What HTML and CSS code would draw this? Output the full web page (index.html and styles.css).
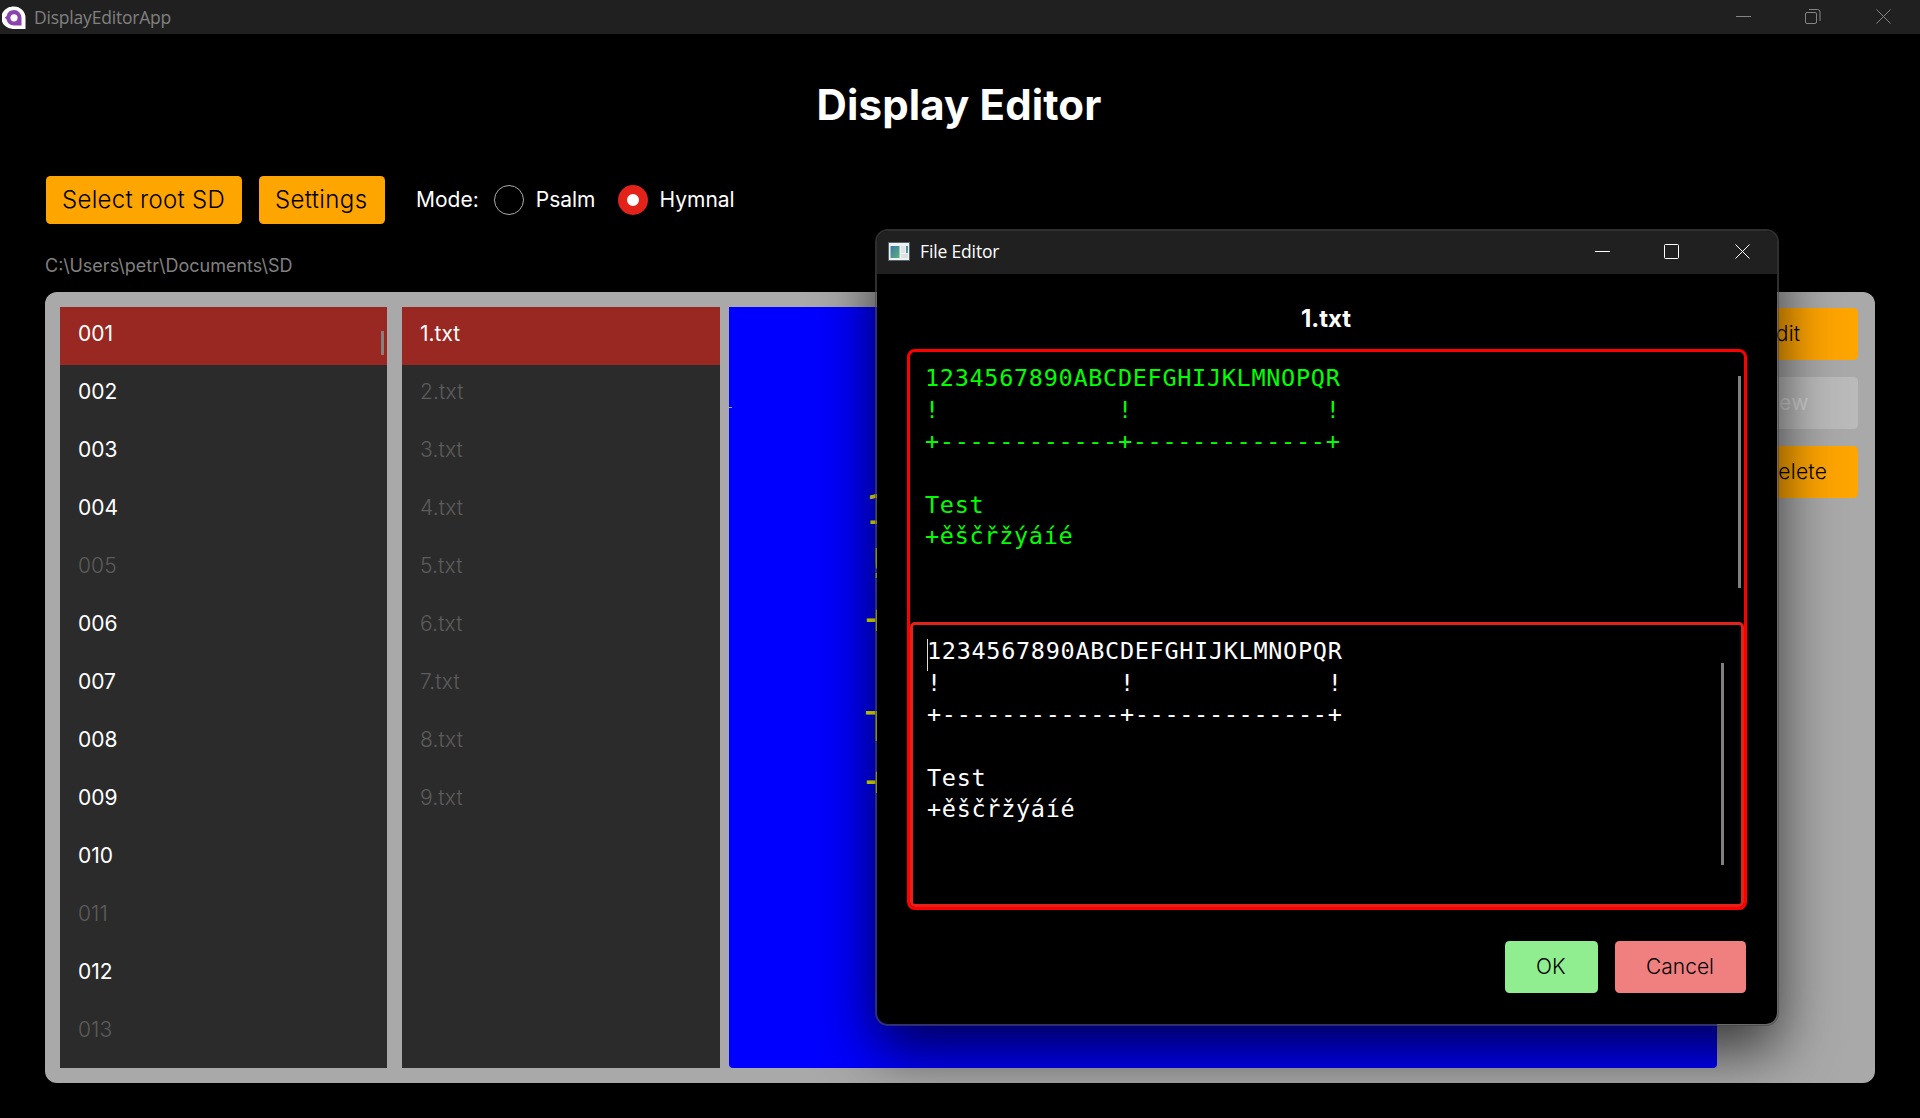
FILE: index.html
```html
<!DOCTYPE html>
<html lang="en">
<head>
<meta charset="utf-8">
<title>DisplayEditorApp</title>
<link rel="stylesheet" href="styles.css">
</head>
<body>
<div class="app">
  <header class="titlebar">
    <svg class="app-icon" width="24" height="24" viewBox="0 0 24 24"><path d="M12 .5A11.5 11.3 0 1 0 12 23H23.500V12A11.500 11.500 0 0 0 12 .5Z" fill="#fff"/><path d="M12 4A7.600 7.600 0 0 0 4.600 10L2.800 11.700L4.600 13.500A7.600 7.600 0 0 0 12 19.500H19.500V12A7.600 7.800 0 0 0 12 4Z" fill="#8b44ac"/><circle cx="12" cy="11.800" r="3.600" fill="#fff"/></svg>
    <span class="titlebar-name">DisplayEditorApp</span>
    <svg class="win-buttons" width="155" height="15" viewBox="0 0 155 15" fill="none" stroke="#858585"><path d="M0 7.500H15"/><rect x="69.500" y="3.500" width="11" height="11" rx="1.500"/><path d="M73 .5H81.500A2.500 2.500 0 0 1 84 3V12"/><path d="M140.500 .5L154.500 14.500M154.500 .5L140.500 14.500"/></svg>
  </header>

  <main class="page">
    <h1 class="heading">Display Editor</h1>
    <div class="toolbar">
      <button class="btn btn-large">Select root SD</button>
      <button class="btn btn-large btn-settings">Settings</button>
      <div class="modes">
        <span>Mode:</span>
        <span class="radio"></span><span>Psalm</span>
        <span class="radio radio-on"></span><span>Hymnal</span>
      </div>
    </div>
    <div class="path">C:\Users\petr\Documents\SD</div>

    <section class="panel">
      <ul class="list folders">
        <li class="selected">001</li><li>002</li><li>003</li><li>004</li><li class="missing">005</li><li>006</li><li>007</li><li>008</li><li>009</li><li>010</li><li class="missing">011</li><li>012</li><li class="missing">013</li>
      </ul>
      <ul class="list files">
        <li class="selected">1.txt</li><li class="missing">2.txt</li><li class="missing">3.txt</li><li class="missing">4.txt</li><li class="missing">5.txt</li><li class="missing">6.txt</li><li class="missing">7.txt</li><li class="missing">8.txt</li><li class="missing">9.txt</li>
      </ul>
      <pre class="display">1234567890ABCDEFGHIJKLMNOPQR
!            !             !
+------------+-------------+

Test
+ěščřžýáíé</pre>
      <div class="actions">
        <button class="btn">Edit</button>
        <button class="btn btn-disabled">New</button>
        <button class="btn">Delete</button>
      </div>
    </section>
  </main>
</div>

<div class="dialog">
  <header class="dialog-bar">
    <svg width="22" height="19" viewBox="0 0 22 19"><defs><linearGradient id="pane" x2="1" y2="1"><stop stop-color="#3e78a4"/><stop offset="1" stop-color="#5db07c"/></linearGradient></defs><rect width="22" height="19" fill="#59636b"/><rect x="1" y="1" width="20" height="17" fill="#eef2f5"/><rect x="2.500" y="4" width="9" height="12" fill="url(#pane)"/><rect x="13" y="4" width="4" height="7" fill="#e2e5e7"/><rect x="18" y="4" width="2" height="7" fill="url(#pane)"/><rect x="13" y="12" width="7" height="4" fill="#dde1e4"/></svg>
    <span class="dialog-name">File Editor</span>
    <svg class="win-buttons" width="155" height="15" viewBox="0 0 155 15" fill="none" stroke="#fff"><path d="M0 7.500H15"/><rect x="69.500" y=".5" width="14" height="14" rx="1"/><path d="M140.500 .5L154.500 14.500M154.500 .5L140.500 14.500"/></svg>
  </header>
  <div class="dialog-body">
    <h2 class="file-title">1.txt</h2>
    <div class="editor">
      <pre class="preview">1234567890ABCDEFGHIJKLMNOPQR
!            !             !
+------------+-------------+

Test
+ěščřžýáíé</pre>
      <pre class="input">1234567890ABCDEFGHIJKLMNOPQR
!            !             !
+------------+-------------+

Test
+ěščřžýáíé</pre>
    </div>
    <footer class="dialog-buttons">
      <button class="btn btn-ok">OK</button>
      <button class="btn btn-cancel">Cancel</button>
    </footer>
  </div>
</div>
</body>
</html>
```
FILE: styles.css
```css
* { box-sizing: border-box; }
body { margin: 0; background: #000; font-family: Inter, sans-serif; color: #fff; overflow: hidden; }
.app { width: 1920px; height: 1118px; display: flex; flex-direction: column; }

.titlebar { height: 34px; background: #202020; display: flex; align-items: center; padding: 0 29px 1px 2px; }
.app-icon { margin-top: 2px; }
.titlebar-name { margin: 1px 0 0 8px; color: #808080; font: 17.500px "Open Sans", sans-serif; letter-spacing: -.2px; }
.win-buttons { margin-left: auto; }

.page { flex: 1; display: flex; flex-direction: column; padding: 0 45px 35px; }
.heading { margin: 45px 0 0; font-size: 42px; line-height: 52px; font-weight: 700; letter-spacing: .12px; text-align: center; padding-right: 2px; }

.toolbar { display: flex; align-items: center; gap: 17px; margin-top: 45px; padding-left: 1px; }
.btn { border: 0; border-radius: 4.500px; background: #ffa500; color: #000; font: 300 21px/26px Inter, sans-serif; padding: 13px 33px; text-align: left; }
.btn-large { font-size: 24px; line-height: 30px; padding: 9px 0 9px 16px; height: 48px; width: 196px; letter-spacing: .3px; }
.btn-settings { width: 126px; letter-spacing: .38px; }
.modes { display: flex; align-items: center; font-size: 21px; line-height: 26px; margin-left: 14px; }
.radio { width: 30px; height: 30px; border: 1px solid #aaa; border-radius: 50%; margin: 0 12px 0 15px; }
.radio-on { border: 9px solid #e32219; background: #fff; margin-left: 22px; }
.path { margin-top: 31px; font-size: 18px; line-height: 22px; color: #808080; }

.panel { flex: 1; display: flex; margin-top: 15px; padding: 15px; background: #a9a9a9; border-radius: 12px; }
.list { list-style: none; margin: 0; padding: 0; background: #2b2b2b; font-size: 21px; }
.list li { height: 58px; padding: 14px 18px; line-height: 26px; }
.list .selected { background: #992722; }
.list .missing { color: #5c5c5c; font-weight: 300; letter-spacing: .15px; }
.folders { width: 327px; position: relative; }
.folders::after { content: ""; position: absolute; right: 3px; top: 24px; width: 3px; height: 24px; background: #848080; }
.files { width: 318px; margin-left: 15px; }
.display { width: 988px; margin: 0 0 0 9px; padding: 176px 0 0 136px; background: #00f; color: #ff0; border-radius: 0 0 4px 4px; font: 41px/54.300px "DejaVu Sans Mono", monospace; overflow: hidden; position: relative; }
.display::before { content: ""; position: absolute; left: 0; top: 100px; width: 3px; height: 1px; background: #a9a9a9; }
.actions { display: flex; flex-direction: column; gap: 17px; margin: 1px 2px 0 auto; }
.actions .btn { height: 52px; width: 129px; padding-left: 34px; letter-spacing: .25px; }
.actions .btn-disabled { background: #bababa; color: #d2d2d2; font-weight: 400; }

.dialog { position: absolute; left: 875px; top: 229px; width: 904px; height: 797px; display: flex; flex-direction: column; border: 2px solid rgba(72, 72, 72, .65); background: #000; background-clip: padding-box; border-radius: 13px; box-shadow: 0 24px 58px rgba(0, 0, 0, .68); overflow: hidden; }
.dialog-bar { height: 43px; flex: none; display: flex; align-items: center; padding: 0 27px 2px 11px; background: #202020; }
.dialog-name { margin: 0 0 1px 10px; font: 17.500px "Open Sans", sans-serif; letter-spacing: -.15px; }
.dialog-body { flex: 1; display: flex; flex-direction: column; padding: 30px 30px 31px; }
.file-title { margin: 0; padding-right: 2px; font-size: 24px; line-height: 30px; font-weight: 700; text-align: center; }
.editor { flex: none; margin-top: 15px; height: 561px; border: 3px solid #f00; border-radius: 8px; display: flex; flex-direction: column; }
.editor pre { margin: 0; font: 23.500px/31.670px "DejaVu Sans Mono", monospace; letter-spacing: .69px; position: relative; }
.preview { height: 270px; padding: 11px 15px; color: #0f0; }
.input { height: 285px; padding: 11px 14px; border: 3px solid #e32219; border-radius: 5px; }
.preview::after, .input::after { content: ""; position: absolute; width: 3px; background: #808080; }
.preview::after { right: 3px; top: 24px; height: 212px; }
.input::after { right: 17px; top: 38px; height: 202px; }
.input::before { content: ""; position: absolute; left: 14px; top: 14px; width: 1px; height: 32px; background: #ddd; }
.dialog-buttons { display: flex; justify-content: flex-end; gap: 17px; margin-top: 31px; padding-right: 1px; }
.btn-ok { width: 93px; background: #90ee90; padding: 13px 0 13px 31px; }
.btn-cancel { width: 131px; background: #f08080; padding: 13px 0 13px 31px; }
```
